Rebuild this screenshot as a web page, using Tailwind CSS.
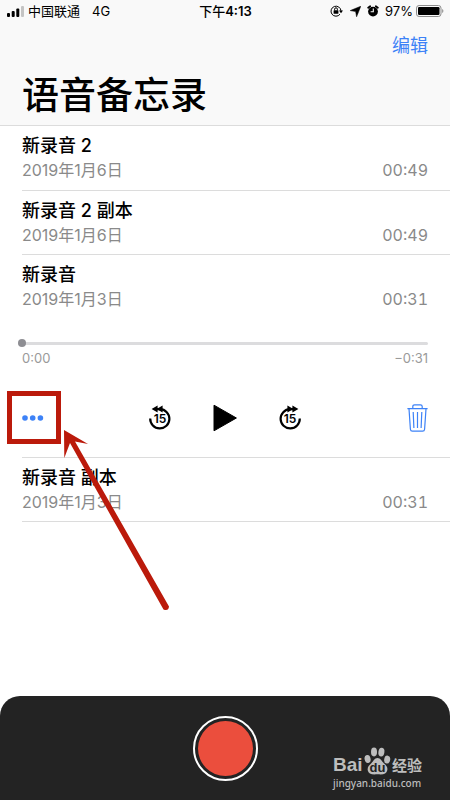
<!DOCTYPE html>
<html lang="zh-CN">
<head>
  <meta charset="UTF-8" />
  <meta name="viewport" content="width=device-width, initial-scale=1.0" />
  <title>语音备忘录</title>
  <script src="https://cdn.jsdelivr.net/npm/@tailwindcss/browser@4"></script>
</head>
<body class="relative bg-white min-h-screen flex flex-col text-black font-['Inter','Noto_Sans_CJK_SC',sans-serif]">
  <header class="bg-[#f9f9f9] border-b border-[#dcdcdc]">
    <!-- Status bar -->
    <div class="grid grid-cols-3 items-center h-[22px] pl-[7px] pr-[6px] text-[13px] leading-5">
      <div class="flex items-center">
        <svg class="w-[17px] h-[11px] mr-1" viewBox="0 0 17 11">
          <rect x="0" y="7" width="3" height="4" rx="1" />
          <rect x="4.7" y="5" width="3" height="6" rx="1" />
          <rect x="9.3" y="2.5" width="3" height="8.5" rx="1" />
          <rect x="14" y="0" width="3" height="11" rx="1" fill="#c4c4c4" />
        </svg>
        <span>中国联通</span>
        <span class="ml-3">4G</span>
      </div>
      <span class="text-center font-medium">下午<span class="font-semibold">4:13</span></span>
      <div class="flex items-center justify-end">
        <svg class="w-[13px] h-3 mr-[7px]" viewBox="0 0 13 12">
          <path d="M10 9.2A5 5 0 1 1 11 6" fill="none" stroke="#000" stroke-width="1" />
          <path d="M9 5.6h4l-2 2.6z" />
          <rect x="3.6" y="5.2" width="4.8" height="3.6" rx=".5" />
          <path d="M4.6 5.4V4.2a1.4 1.4 0 0 1 2.8 0v1.2" fill="none" stroke="#000" />
        </svg>
        <svg class="w-[11px] h-[11px] mr-[6px]" viewBox="0 0 11 11">
          <path d="M10.8.2 6.6 10.8 5.6 5.6.2 4.6z" stroke="#000" stroke-width=".5" />
        </svg>
        <svg class="w-3 h-3 mr-[6px]" viewBox="0 0 12 12">
          <circle cx="6" cy="6.6" r="4.9" />
          <path d="M1.2 2.8 3.2 1.2M10.8 2.8 8.8 1.2" stroke="#000" stroke-width="1.8" stroke-linecap="round" />
          <path d="M6.3 3.6v3.2H3.6" fill="none" stroke="#f9f9f9" stroke-width="1.1" />
        </svg>
        <span class="mr-[3px]">97%</span>
        <svg class="w-7 h-3" viewBox="0 0 28 12">
          <rect x=".5" y=".5" width="24.5" height="11" rx="2.6" fill="none" stroke="#8c8c8c" />
          <rect x="2" y="2" width="21.5" height="8" rx="1.2" />
          <path d="M26.2 4c1.6.6 1.6 3.4 0 4z" fill="#8c8c8c" />
        </svg>
      </div>
    </div>
    <div class="flex justify-end px-[22px] pt-[10px]">
      <button class="text-[18px] leading-7 text-[#3d82f7]">编辑</button>
    </div>
    <h1 class="px-[22px] pt-3 pb-[5px] text-[37px] leading-12 font-medium">语音备忘录</h1>
  </header>

  <main>
    <ul class="pl-[22px]">
      <li class="pt-2 pb-2 pr-[22px] border-b border-[#dcdcdc]">
        <h2 class="text-[18px] leading-6 font-medium">新录音 2</h2>
        <div class="flex justify-between text-[16px] leading-6 text-[#8a8a8a]">
          <span>2019年1月6日</span>
          <span class="tabular-nums">00:49</span>
        </div>
      </li>
      <li class="pt-2 pb-[7px] pr-[22px] border-b border-[#dcdcdc]">
        <h2 class="text-[18px] leading-6 font-medium">新录音 2 副本</h2>
        <div class="flex justify-between text-[16px] leading-6 text-[#8a8a8a]">
          <span>2019年1月6日</span>
          <span class="tabular-nums">00:49</span>
        </div>
      </li>

      <!-- Opened recording -->
      <li class="relative pt-2 pb-[19px] border-b border-[#dcdcdc]">
        <div class="pr-[22px]">
          <h2 class="text-[18px] leading-6 font-medium">新录音</h2>
          <div class="flex justify-between text-[16px] leading-6 text-[#8a8a8a]">
            <span>2019年1月3日</span>
            <span class="tabular-nums">00:31</span>
          </div>
          <div class="-ml-1 pt-7 flex">
            <input type="range" min="0" max="31" value="0" aria-label="播放进度" class="w-full h-2 appearance-none bg-transparent [&::-webkit-slider-runnable-track]:h-[3px] [&::-webkit-slider-runnable-track]:rounded-full [&::-webkit-slider-runnable-track]:bg-[#dcdcde] [&::-webkit-slider-thumb]:appearance-none [&::-webkit-slider-thumb]:size-2 [&::-webkit-slider-thumb]:-mt-[3px] [&::-webkit-slider-thumb]:rounded-full [&::-webkit-slider-thumb]:bg-[#8e8e93]" />
          </div>
          <div class="flex justify-between text-[13px] leading-5 pt-[1px] text-[#9a9a9a]">
            <span>0:00</span>
            <span>−0:31</span>
          </div>
          <div class="flex items-center justify-between pt-[30px]">
            <button aria-label="更多" class="w-[22px] h-10 flex items-center">
              <svg class="w-[22px] h-[6px]" viewBox="0 0 22 6" fill="#3d82f7">
                <circle cx="3" cy="3" r="2.8" />
                <circle cx="10.7" cy="3" r="2.8" />
                <circle cx="18.4" cy="3" r="2.8" />
              </svg>
            </button>
            <div class="flex items-center gap-10">
              <button aria-label="后退15秒">
                <svg class="w-[26px] h-[26px]" viewBox="0 0 26 26">
                  <path d="M3.2 13.6A9.6 9.6 0 1 0 13 4.2H10" fill="none" stroke="#000" stroke-width="2.2" />
                  <path d="M4.6 4 10.6.6v6.8zM9.6 4 15.6.6v6.8z" />
                  <text x="13" y="18" text-anchor="middle" font-size="12" font-weight="600">15</text>
                </svg>
              </button>
              <button aria-label="播放">
                <svg class="w-6 h-7" viewBox="0 0 24 28">
                  <path d="M1 1.2 23.4 14 1 26.8z" stroke="#000" stroke-linejoin="round" />
                </svg>
              </button>
              <button aria-label="前进15秒">
                <svg class="w-[26px] h-[26px]" viewBox="0 0 26 26">
                  <path d="M22.8 13.6A9.6 9.6 0 1 1 13 4.2h3" fill="none" stroke="#000" stroke-width="2.2" />
                  <path d="M21.4 4 15.4.6v6.8zM16.4 4 10.4.6v6.8z" />
                  <text x="13" y="18" text-anchor="middle" font-size="12" font-weight="600">15</text>
                </svg>
              </button>
            </div>
            <button aria-label="删除" class="w-[22px] flex justify-end">
              <svg class="w-[21px] h-7" viewBox="0 0 21 28" fill="none" stroke="#3d82f7" stroke-width="1.2">
                <path d="M.4 4.6h20.2M5.8 4.4V2.6Q5.8.8 7.6.8h5.8q1.8 0 1.8 1.8v1.8" />
                <path d="m2 4.8 1.4 20.4q.2 2 2 2h10.2q1.8 0 2-2L19 4.8" />
                <path d="m6.2 8 .7 16M10.5 8v16M14.8 8l-.7 16" />
              </svg>
            </button>
          </div>
        </div>

        <!-- Callout around the more button -->
        <div class="absolute -left-[15px] bottom-[13px] w-[54px] h-[53px] border-[5px] border-[#bb1a0b] pointer-events-none"></div>
        <svg class="absolute z-10 left-[42px] top-[175px] w-[106px] h-[181px] pointer-events-none" viewBox="0 0 106 181">
          <path d="M0 0 24 14 11 11.5 105 176.5Q104.500 181.500 99.500 179.500L6 13 .3 28z" fill="#bb1a0b" />
        </svg>
      </li>

      <li class="pt-2 pb-[7px] pr-[22px] border-b border-[#dcdcdc]">
        <h2 class="text-[18px] leading-6 font-medium">新录音 副本</h2>
        <div class="flex justify-between text-[16px] leading-6 text-[#8a8a8a]">
          <span>2019年1月3日</span>
          <span class="tabular-nums">00:31</span>
        </div>
      </li>
    </ul>
  </main>

  <footer class="relative mt-auto h-[104px] bg-[#232323] rounded-t-[20px] flex justify-center items-center">
    <button aria-label="录音" class="size-[65px] rounded-full border-2 border-white p-[3px]">
      <span class="block size-full rounded-full bg-[#eb4e3d]"></span>
    </button>
    <!-- Watermark -->
    <div class="absolute right-7 bottom-[9px] w-[89px] text-[#bdbdbd]">
      <div class="flex items-end justify-between h-7">
        <span class="text-[19px] leading-5 font-bold font-['Liberation_Sans',sans-serif]">Bai</span>
        <svg class="w-[27px] h-7" viewBox="0 0 27 28" fill="#bdbdbd">
          <ellipse cx="3.6" cy="12" rx="3" ry="4" transform="rotate(-12 3.6 12)" />
          <ellipse cx="10" cy="5" rx="3" ry="4.4" />
          <ellipse cx="17.4" cy="5.2" rx="3" ry="4.4" transform="rotate(8 17.4 5.2)" />
          <ellipse cx="23.2" cy="12.6" rx="3" ry="4" transform="rotate(10 23.2 12.6)" />
          <path d="M13.5 11c3 0 4 3 6.3 5.2 2.6 2.3 4.2 4 3.4 7.4-.8 3.6-4 4.2-9.7 3.7-5.7.5-9-.1-9.7-3.7-.7-3.4 1-5 3.5-7.4C9.7 14 10.5 11 13.5 11z" />
          <text x="13.5" y="25" text-anchor="middle" font-family="Liberation Sans" font-size="13" font-weight="700" fill="#232323">du</text>
        </svg>
        <span class="text-[15px] leading-5 font-bold font-['Noto_Sans_CJK_SC',sans-serif]">经验</span>
      </div>
      <div class="text-[10px] leading-4 font-medium font-['Noto_Sans',sans-serif]">jingyan.baidu.com</div>
    </div>
  </footer>
</body>
</html>
